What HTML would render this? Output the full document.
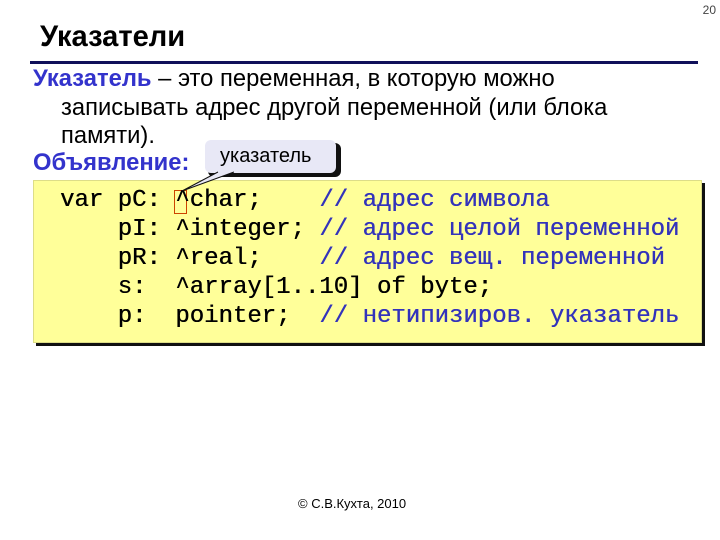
<!DOCTYPE html>
<html><head><meta charset="utf-8"><style>
body{margin:0;width:720px;height:540px;background:#fff;position:relative;overflow:hidden;font-family:"Liberation Sans",sans-serif}
.a{position:absolute;white-space:pre}
.t{font-size:24px;color:#000;transform:scaleX(0.99);transform-origin:left}
.code{font-family:"Liberation Mono",monospace;font-weight:normal;font-size:24px;color:#000;text-shadow:0.4px 0 0 currentColor}
.c{color:#3333bb}
</style></head><body>
<div class="a" style="right:4px;top:3px;font-size:12px;color:#444">20</div>
<div class="a" style="left:40px;top:20px;font-size:30px;font-weight:bold;transform:scaleX(0.97);transform-origin:left">Указатели</div>
<div class="a" style="left:30px;top:61px;width:668px;height:3px;background:#10105a"></div>
<div class="a t" style="left:33px;top:65px"><b style="color:#3333cc">Указатель</b> – это переменная, в которую можно</div>
<div class="a t" style="left:61px;top:94px">записывать адрес другой переменной (или блока</div>
<div class="a t" style="left:61px;top:122px">памяти).</div>
<div class="a t" style="left:33px;top:149px;font-weight:bold;color:#3333cc">Объявление:</div>
<div class="a" style="left:36px;top:183px;width:669px;height:163px;background:#111"></div>
<div class="a" style="left:33px;top:180px;width:667px;height:161px;background:#ffff99;border:1px solid #dddd88"></div>
<div class="a" style="left:174px;top:190px;width:13px;height:24px;border:1px solid #cc4400;box-sizing:border-box"></div>
<div class="a code" style="left:60px;top:186px;line-height:29px">var pC: ^char;    <span class="c">// адрес символа</span>
    pI: ^integer; <span class="c">// адрес целой переменной</span>
    pR: ^real;    <span class="c">// адрес вещ. переменной</span>
    s:  ^array[1..10] of byte;
    p:  pointer;  <span class="c">// нетипизиров. указатель</span></div>
<svg class="a" style="left:0;top:0" width="720" height="540">
<rect x="208" y="143" width="133" height="34" rx="6" fill="#111"/>
<rect x="205" y="140" width="131" height="33" rx="6" fill="#e8e8f6"/>
<path d="M218 172 L182 191 L234 172" fill="#e8e8f6" stroke="#111" stroke-width="1"/>
</svg>
<div class="a" style="left:220px;top:145px;font-size:20px">указатель</div>
<div class="a" style="left:298px;top:496px;font-size:13px">© С.В.Кухта, 2010</div>
</body></html>
